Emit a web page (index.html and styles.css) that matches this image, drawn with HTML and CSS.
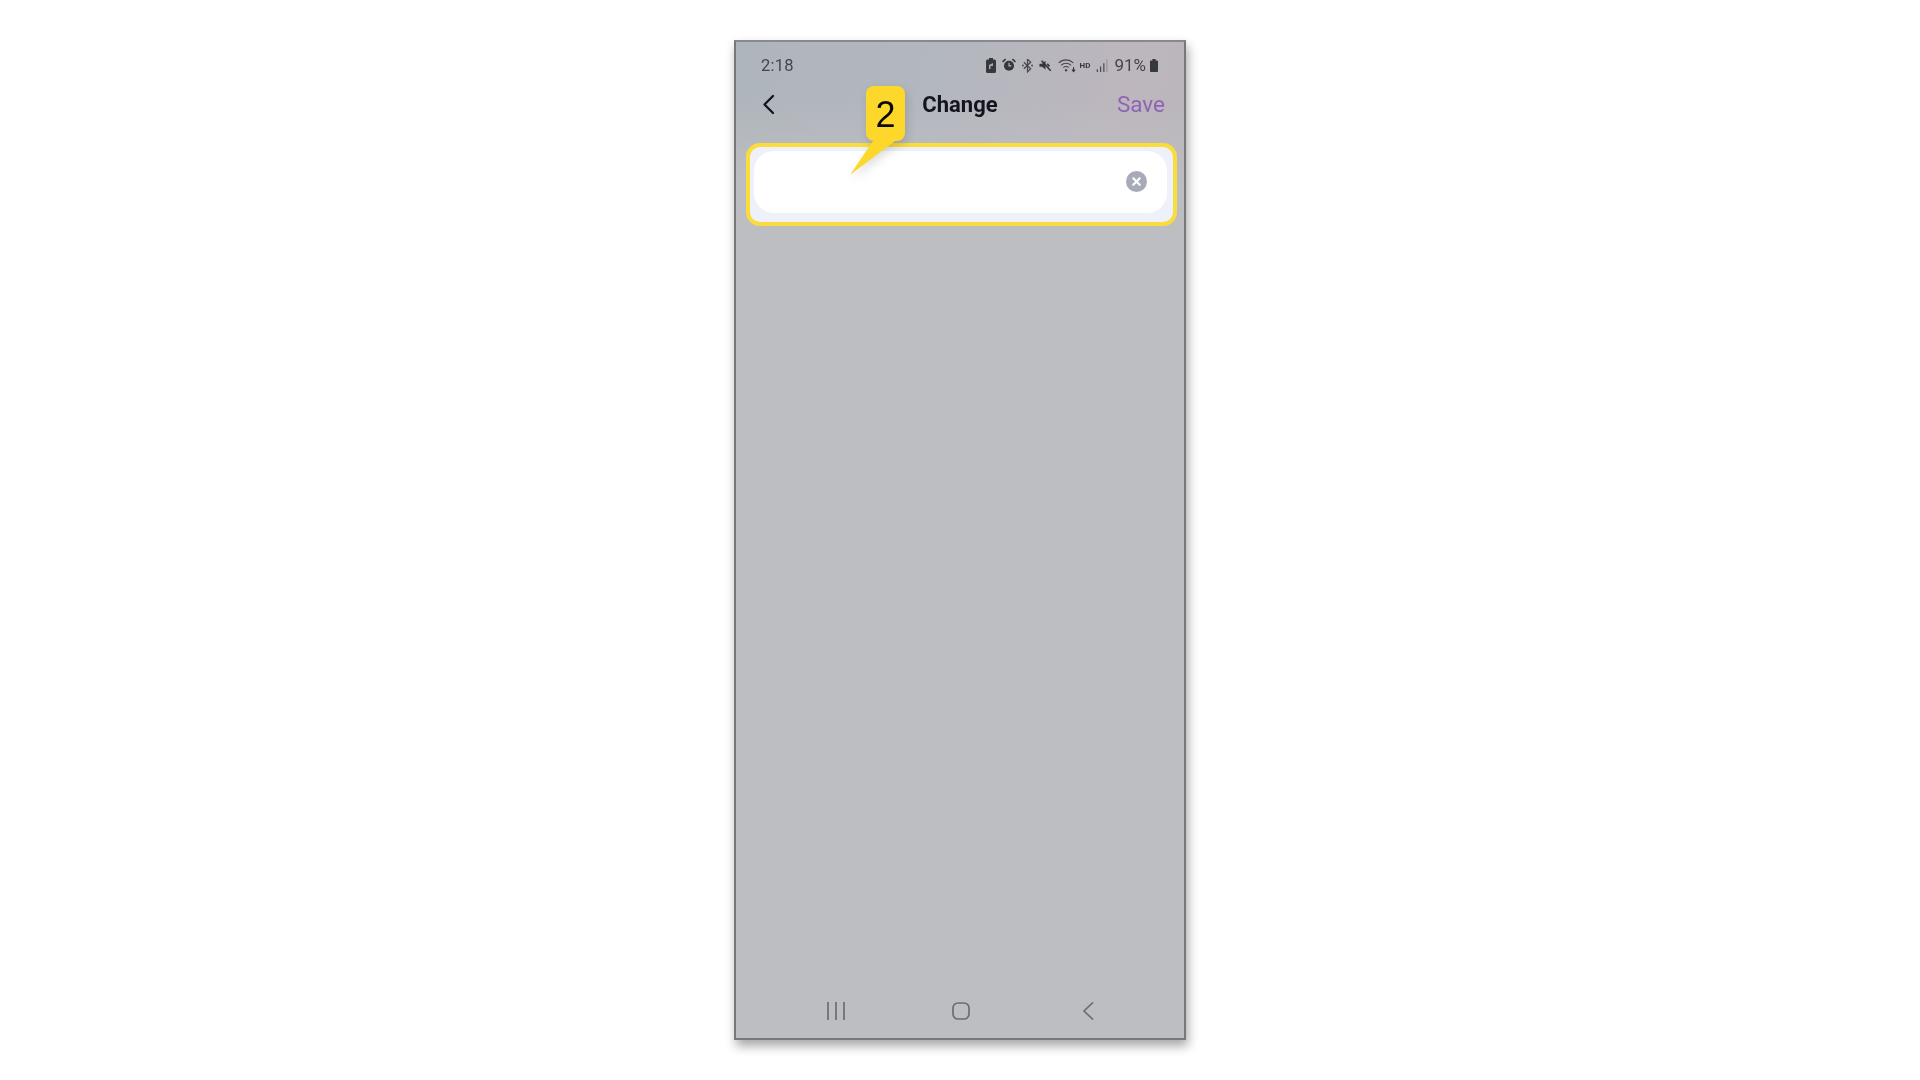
FILE: index.html
```html
<!DOCTYPE html>
<html lang="en">
<head>
<meta charset="utf-8">
<title>Change</title>
<link rel="stylesheet" href="styles.css">
</head>
<body>
<main class="phone">
  <div class="wash"></div>
  <div class="status">
    <span class="time">2:18</span>
    <div class="status-icons">
      <svg class="si" width="10" height="15" viewBox="0 0 10 15"><path fill="#37383c" d="M3 0h4v1.500h1.500A1.500 1.500 0 0 1 10 3v10.500A1.500 1.500 0 0 1 8.500 15h-7A1.500 1.500 0 0 1 0 13.500V3a1.500 1.500 0 0 1 1.500-1.500H3z"/><path fill="#a9aaad" d="M3 7l4-2v3H4.500v3H3z"/></svg>
      <svg class="si" width="14" height="14" viewBox="0 0 15 15"><circle cx="7.500" cy="8.300" r="5.400" fill="#37383c"/><path fill="#37383c" d="M0 3.500 3.300 0.500l1.200 1.200L1.200 4.800zM15 3.500 11.700 0.500l-1.200 1.200 3.300 3.100z"/><path fill="none" stroke="#b8b8bd" stroke-width="1.200" d="M7.500 5v3.500h2.500"/></svg>
      <svg class="si" width="11" height="15" viewBox="0 0 12 16"><path fill="none" stroke="#45464a" stroke-width="1.300" d="M6 1v14l3.500-3.500-7.500-7M6 1l3.500 3.500-7.500 7"/><circle cx="1" cy="8" r="1" fill="#45464a"/><circle cx="11" cy="8" r="1" fill="#45464a"/></svg>
      <svg class="si" width="13" height="13" viewBox="0 0 15 15"><path fill="#37383c" d="M0.500 5.500h3L7.500 2v10L3.500 9h-3z"/><path stroke="#37383c" stroke-width="1.900" d="M3 2l10.500 11.500M9.500 5.500l2.500 3"/></svg>
      <svg class="si" width="18" height="15" viewBox="0 0 19 16"><g fill="none" stroke="#48494d" stroke-width="1.200"><path d="M0.800 5.200a11 11 0 0 1 15.400 0"/><path d="M3.200 7.800a7.500 7.500 0 0 1 10.600 0"/><path d="M5.600 10.300a4 4 0 0 1 5.800 0"/></g><circle cx="8.500" cy="13" r="1.300" fill="#48494d"/><path stroke="#37383c" stroke-width="1.100" d="M16.500 9.500v5M14.800 12.500l1.700 2 1.700-2"/></svg>
      <span class="hd">HD</span>
      <svg class="si" width="12" height="13" viewBox="0 0 12 14"><path stroke="#48494d" stroke-width="1.300" d="M1 14v-3M4.500 14V8M8 14V4.500"/><path stroke="#8a8b8f" stroke-width="1" d="M11.300 14V0.500"/></svg>
      <span class="pct">91%</span>
      <svg class="si batt" width="8" height="13" viewBox="0 0 10 13" preserveAspectRatio="none"><path fill="#37383c" d="M3 0h4v1.500h2a1 1 0 0 1 1 1V12a1 1 0 0 1-1 1H1a1 1 0 0 1-1-1V2.500a1 1 0 0 1 1-1h2z"/></svg>
    </div>
  </div>
  <header class="appbar">
    <svg class="back" width="13" height="21" viewBox="0 0 13 21"><path fill="none" stroke="#14141c" stroke-width="2.300" stroke-linecap="round" stroke-linejoin="round" d="M11 2 2.500 10.500 11 19"/></svg>
    <h1 class="title">Change</h1>
    <span class="save">Save</span>
  </header>
  <div class="highlight">
    <div class="field">
      <svg class="clear" width="21" height="21" viewBox="0 0 21 21"><circle cx="10.500" cy="10.500" r="10.500" fill="#a8aab8"/><path stroke="#fff" stroke-width="2.200" stroke-linecap="round" d="M7.300 7.300l6.400 6.400M13.700 7.300l-6.400 6.400"/></svg>
    </div>
  </div>
  <div class="spacer"></div>
  <nav class="navbar">
    <svg width="18" height="18" viewBox="0 0 18 18"><path stroke="#6c6d72" stroke-width="1.700" d="M1 0v18M9 0v18M17 0v18"/></svg>
    <svg width="18" height="18" viewBox="0 0 18 18"><rect x="1" y="1" width="16" height="16" rx="5" fill="none" stroke="#6c6d72" stroke-width="1.700"/></svg>
    <svg class="nav-back" width="12" height="18" viewBox="0 0 12 18"><path fill="none" stroke="#6c6d72" stroke-width="1.700" d="M11 0.500 2 9l9 8.500"/></svg>
  </nav>
  <div class="callout">
    <svg class="tail" width="60" height="40" viewBox="0 0 60 40"><path fill="#fdd72a" d="M23 0 0 34 45 0z"/></svg>
    <span class="num">2</span>
  </div>
</main>
</body>
</html>
```
FILE: styles.css
```css
* { box-sizing: border-box; }
html, body { margin: 0; height: 100%; }
body {
  background: #fff;
  display: flex;
  justify-content: center;
  align-items: flex-start;
  padding: 40px 0 0 0;
  font-family: Roboto, "Liberation Sans", sans-serif;
}
.phone {
  position: relative;
  width: 452px;
  height: 1000px;
  display: flex;
  flex-direction: column;
  background: #bdbec2;
  border: 2px solid #77787b;
  border-top-color: #88898c;
  box-shadow: 2px 6px 10px rgba(0, 0, 0, 0.35);
  filter: blur(0.4px);
}
.wash {
  position: absolute;
  left: 0;
  right: 0;
  top: 0;
  height: 140px;
  background:
    linear-gradient(to bottom, rgba(189, 190, 194, 0) 40%, #bdbec2 100%),
    linear-gradient(100deg, #aeb5bb 0%, #b3b7bf 45%, #bdb6bd 85%, #bab5bc 100%);
}
.status {
  position: relative;
  height: 46px;
  padding: 0 26px 0 26px;
  display: flex;
  justify-content: space-between;
  align-items: center;
  color: #45464a;
}
.time { font-size: 16.500px; letter-spacing: 0.200px; margin-left: -1px; }
.status-icons { display: flex; align-items: center; gap: 6px; }
.si { display: block; }
.batt { margin-left: -2px; }
.hd { font-size: 8px; font-weight: 700; color: #37383c; margin-left: -2px; }
.pct { font-size: 17px; margin-left: 0; }
.appbar {
  position: relative;
  height: 32px;
  padding: 0 19px 0 26px;
  display: flex;
  align-items: center;
  justify-content: space-between;
}
.back { display: block; }
.title {
  position: absolute;
  left: 0;
  right: 0;
  top: 1px;
  height: 100%;
  margin: 0;
  display: flex;
  align-items: center;
  justify-content: center;
  font-size: 22px;
  font-weight: 700;
  color: #14141f;
  line-height: 1;
}
.save { position: relative; font-size: 22.500px; color: #8e63b4; }
.highlight {
  position: relative;
  margin: 23px 7px 0 10px;
  height: 83px;
  padding: 4px 6px 9px 4px;
  background: #eff1fa;
  border: 4px solid #fadc3c;
  border-radius: 14px;
}
.field {
  height: 100%;
  padding-right: 20px;
  padding-bottom: 1px;
  background: #fff;
  border-radius: 20px;
  display: flex;
  align-items: center;
  justify-content: flex-end;
}
.clear { display: block; }
.spacer { flex: 1; }
.navbar {
  position: relative;
  height: 54px;
  padding: 0 0 0 91px;
  display: flex;
  align-items: center;
  gap: 107px;
}
.nav-back { margin-left: 5px; }
.callout {
  position: absolute;
  left: 130px;
  top: 44px;
  width: 39px;
  height: 55px;
  padding-top: 3px;
  background: #fdd72a;
  border-radius: 8px;
  display: flex;
  align-items: center;
  justify-content: center;
  filter: drop-shadow(2px 4px 5px rgba(0, 0, 0, 0.14));
}
.tail {
  position: absolute;
  left: -16px;
  top: 55px;
}
.num {
  position: relative;
  font-family: "Liberation Sans", sans-serif;
  font-size: 36px;
  color: #0a0a0a;
  line-height: 1;
}
```
